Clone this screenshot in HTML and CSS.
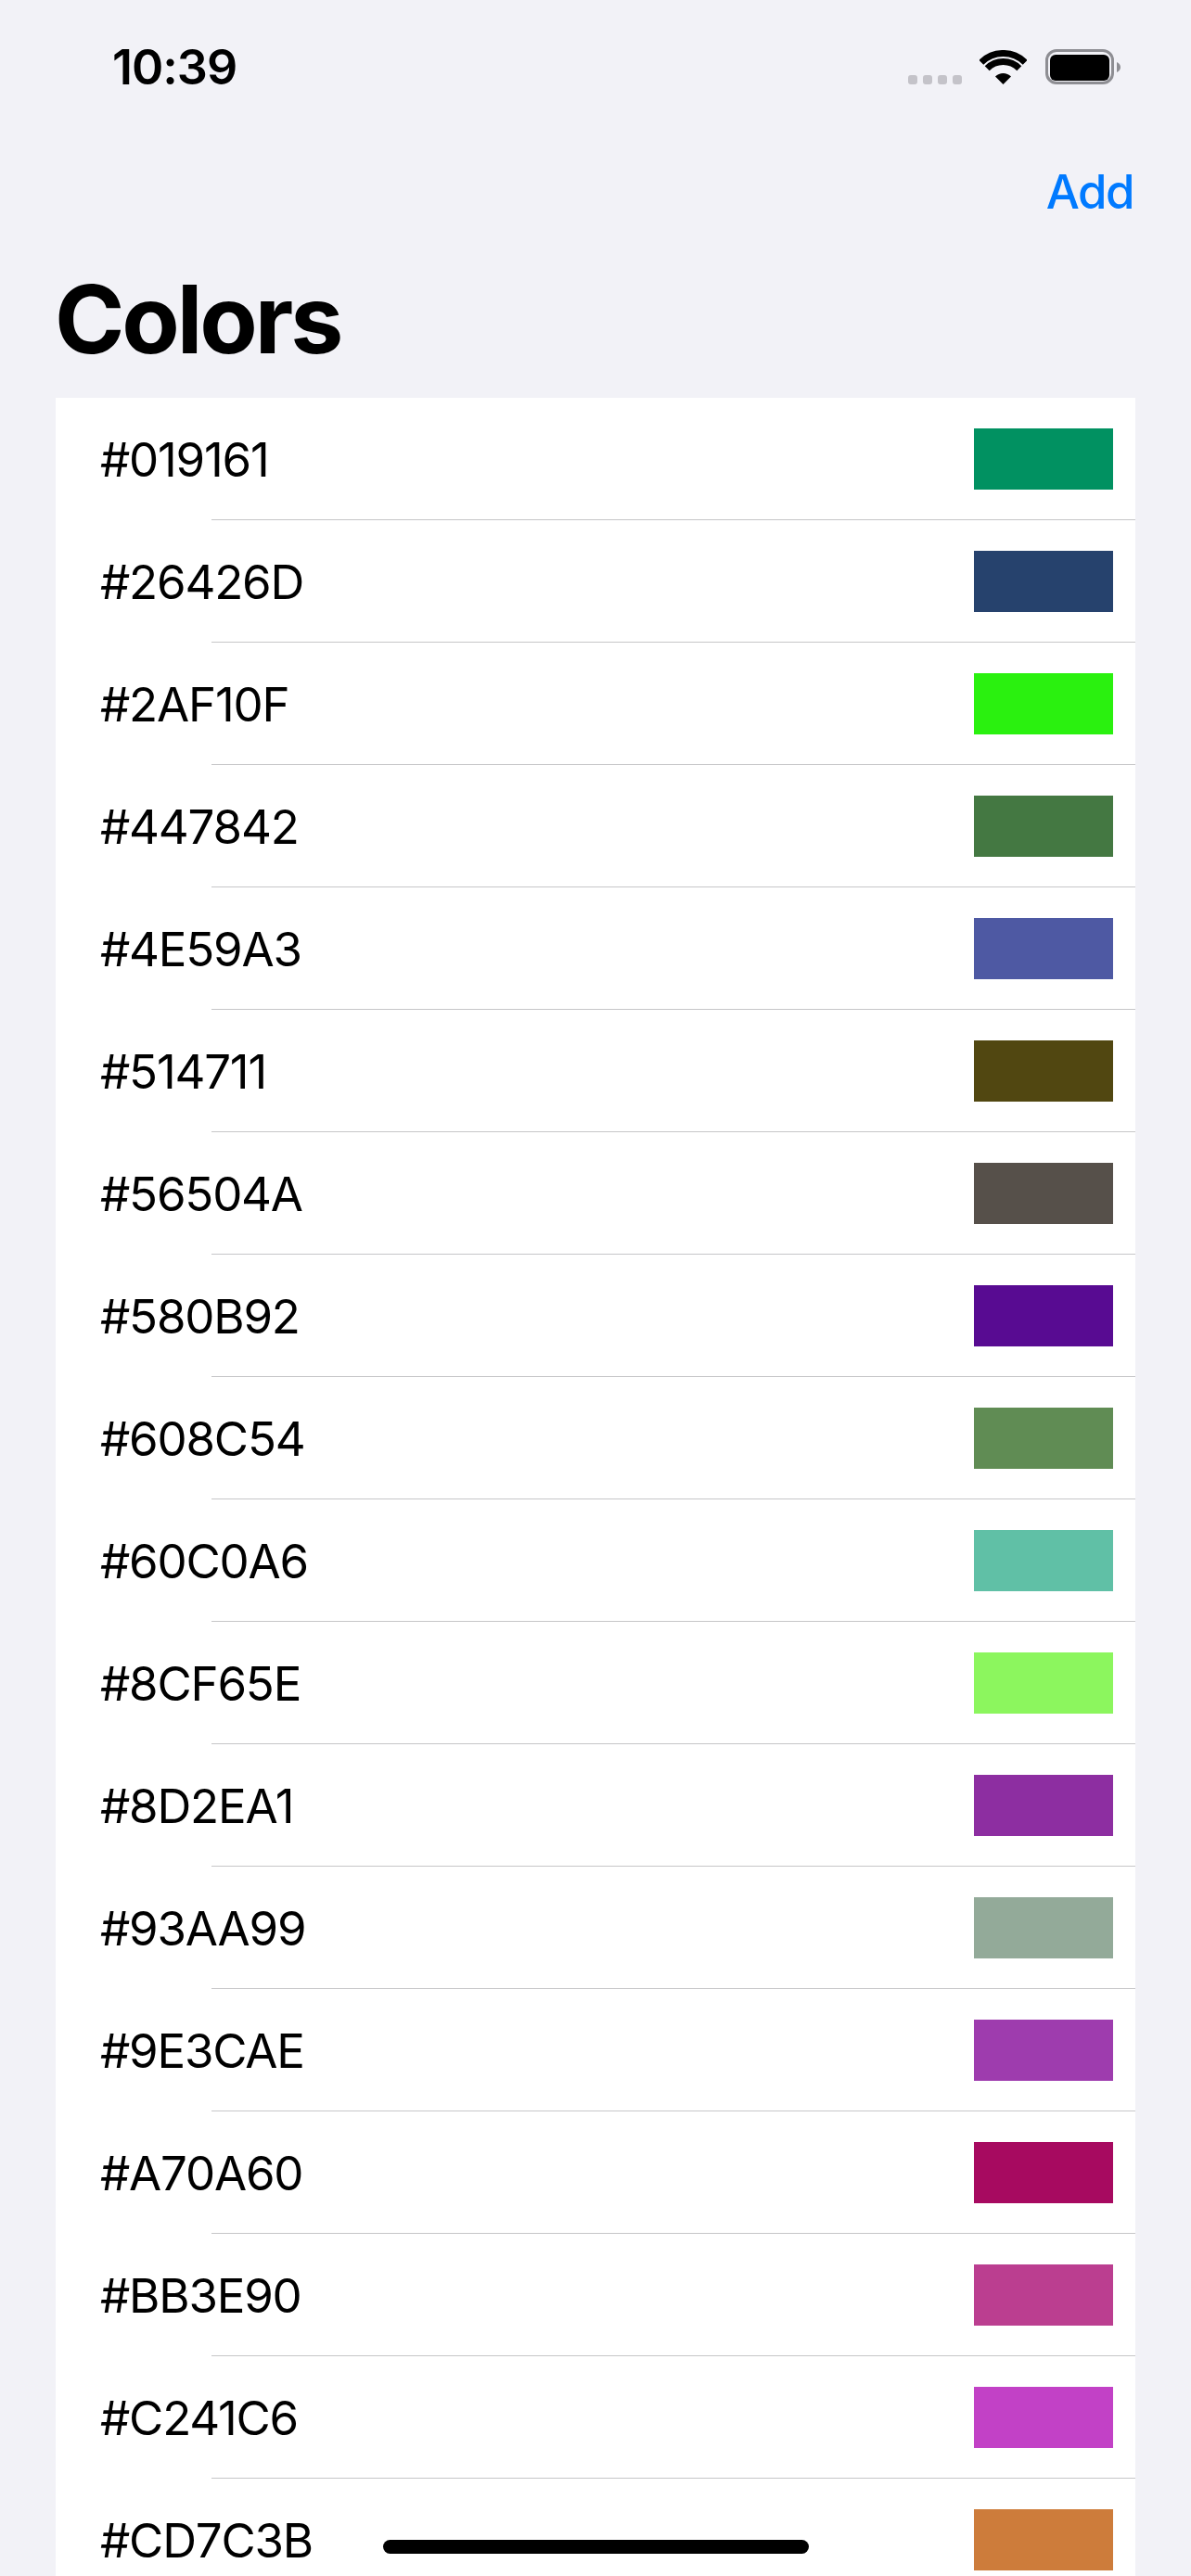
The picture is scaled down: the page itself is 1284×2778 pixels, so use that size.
FILE: index.html
```html
<!DOCTYPE html>
<html lang="en">
<head>
    <meta charset="UTF-8">
    <meta name="viewport" content="width=device-width, initial-scale=1.0">
    <title>Colors</title>
    <link rel="stylesheet" href="styles.css">
</head>
<body>
    <header class="status-bar">
        <span class="clock">10:39</span>
        <div class="status-icons">
            <div class="signal">
                <span class="signal-dot"></span>
                <span class="signal-dot"></span>
                <span class="signal-dot"></span>
                <span class="signal-dot"></span>
            </div>
            <svg class="wifi" width="51" height="37" viewBox="0 0 51 37">
                <path d="M1.8 13.3A33.5 33.5 0 0 1 49.2 13.3" fill="none" stroke="#000" stroke-width="7"/>
                <path d="M8.2 19.7A24.5 24.5 0 0 1 42.8 19.7" fill="none" stroke="#000" stroke-width="7"/>
                <path d="M25.5 37L17 28.5A12 12 0 0 1 34 28.5Z" fill="#000"/>
            </svg>
            <svg class="battery" width="81" height="38" viewBox="0 0 81 38">
                <rect x="1.5" y="1.5" width="71" height="35" rx="10.5" fill="none" stroke="#8e8e93" stroke-width="3"/>
                <rect x="5" y="6" width="64" height="28" rx="6" fill="#000"/>
                <path d="M77 14C79.5 15 81 17 81 19.5C81 22 79.5 24 77 25Z" fill="#8e8e93"/>
            </svg>
        </div>
    </header>

    <nav class="nav-bar">
        <a class="nav-add">Add</a>
    </nav>

    <h1 class="page-title">Colors</h1>

    <ul class="color-list">
        <li class="color-row"><span class="color-name">#019161</span><span class="swatch" style="background-color: #019161"></span></li>
        <li class="color-row"><span class="color-name">#26426D</span><span class="swatch" style="background-color: #26426D"></span></li>
        <li class="color-row"><span class="color-name">#2AF10F</span><span class="swatch" style="background-color: #2AF10F"></span></li>
        <li class="color-row"><span class="color-name">#447842</span><span class="swatch" style="background-color: #447842"></span></li>
        <li class="color-row"><span class="color-name">#4E59A3</span><span class="swatch" style="background-color: #4E59A3"></span></li>
        <li class="color-row"><span class="color-name">#514711</span><span class="swatch" style="background-color: #514711"></span></li>
        <li class="color-row"><span class="color-name">#56504A</span><span class="swatch" style="background-color: #56504A"></span></li>
        <li class="color-row"><span class="color-name">#580B92</span><span class="swatch" style="background-color: #580B92"></span></li>
        <li class="color-row"><span class="color-name">#608C54</span><span class="swatch" style="background-color: #608C54"></span></li>
        <li class="color-row"><span class="color-name">#60C0A6</span><span class="swatch" style="background-color: #60C0A6"></span></li>
        <li class="color-row"><span class="color-name">#8CF65E</span><span class="swatch" style="background-color: #8CF65E"></span></li>
        <li class="color-row"><span class="color-name">#8D2EA1</span><span class="swatch" style="background-color: #8D2EA1"></span></li>
        <li class="color-row"><span class="color-name">#93AA99</span><span class="swatch" style="background-color: #93AA99"></span></li>
        <li class="color-row"><span class="color-name">#9E3CAE</span><span class="swatch" style="background-color: #9E3CAE"></span></li>
        <li class="color-row"><span class="color-name">#A70A60</span><span class="swatch" style="background-color: #A70A60"></span></li>
        <li class="color-row"><span class="color-name">#BB3E90</span><span class="swatch" style="background-color: #BB3E90"></span></li>
        <li class="color-row"><span class="color-name">#C241C6</span><span class="swatch" style="background-color: #C241C6"></span></li>
        <li class="color-row"><span class="color-name">#CD7C3B</span><span class="swatch" style="background-color: #CD7C3B"></span></li>
    </ul>

    <div class="home-bar"></div>
</body>
</html>
```

FILE: styles.css
```css
html, body {
    height: 2778px;
    margin: 0;
    overflow: hidden;
}
body {
    position: relative;
    font-family: Inter, "Liberation Sans", sans-serif;
    background-color: #f2f2f7;
    color: #000;
}
.status-bar {
    height: 132px;
    display: flex;
    align-items: flex-start;
    justify-content: space-between;
    padding: 0 76px 0 121px;
    box-sizing: border-box;
}
.clock {
    margin-top: 43px;
    font-size: 52px;
    line-height: 60px;
    font-weight: 600;
    letter-spacing: -1px;
}
.status-icons {
    display: flex;
    align-items: flex-start;
    margin-top: 53px;
}
.signal {
    display: flex;
    gap: 6px;
    margin: 28px 19px 0 0;
}
.signal-dot {
    width: 10px;
    height: 10px;
    border-radius: 3px;
    background-color: #c4c3c9;
}
.wifi {
    margin: 1px 20px 0 0;
}
.nav-bar {
    height: 132px;
    display: flex;
    justify-content: flex-end;
    padding-right: 62px;
}
.nav-add {
    margin-top: 45px;
    font-size: 51px;
    line-height: 60px;
    letter-spacing: -1.5px;
    font-weight: 500;
    color: #007aff;
}
.page-title {
    height: 165px;
    margin: 0;
    padding-left: 59px;
    font-size: 102px;
    line-height: 160px;
    font-weight: 700;
    letter-spacing: -3.1px;
}
.color-list {
    list-style: none;
    margin: 0 60px;
    padding: 0;
    background-color: #fff;
}
.color-row {
    position: relative;
    height: 132px;
    display: flex;
    align-items: center;
    justify-content: space-between;
    padding: 0 24px 0 48px;
    box-sizing: border-box;
}
.color-row::after {
    content: "";
    position: absolute;
    left: 168px;
    right: 0;
    bottom: 0;
    height: 1px;
    background-color: #c6c6c8;
}
.color-name {
    font-size: 51px;
    letter-spacing: -1.2px;
}
.swatch {
    width: 150px;
    height: 66px;
}
.home-bar {
    position: absolute;
    left: 413px;
    top: 2739px;
    width: 459px;
    height: 15px;
    border-radius: 8px;
    background-color: #000;
}
```
